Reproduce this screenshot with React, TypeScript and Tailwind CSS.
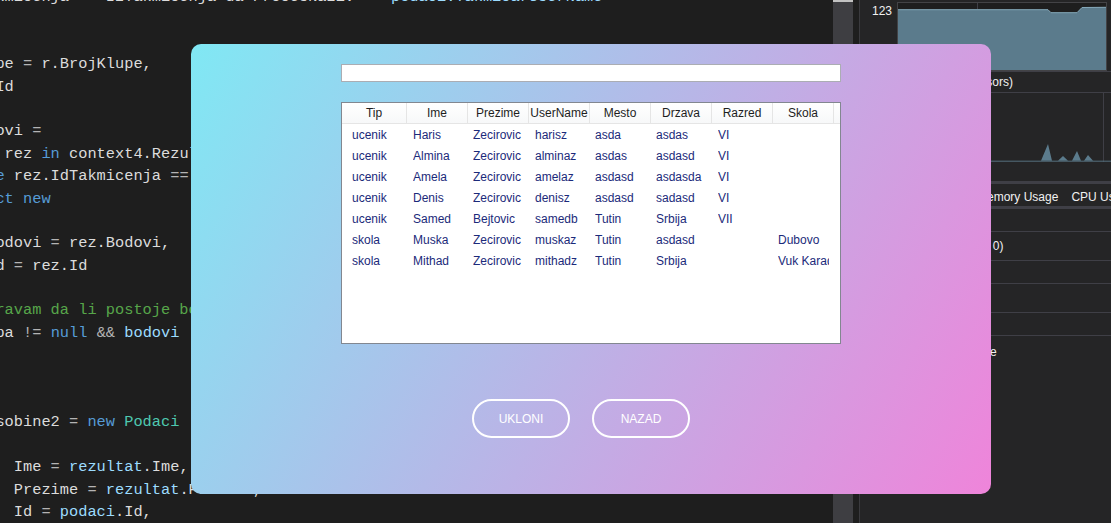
const C = {
  txt: '#dcdcdc',
  op: '#b4b4b4',
  kw: '#569cd6',
  loc: '#9cdcfe',
  type: '#4ec9b0',
  com: '#57a64a',
};

type Seg = [string, string];

// visible slice of the code behind the dialog
const codeLines: Seg[][] = [
  [['kmicenja    IzTakmicenja da ProcesNaziv    ', C.txt], ['podaci.TakmicarUserName', C.loc]],
  [],
  [],
  [['pe ', C.txt], ['=', C.op], [' r.BrojKlupe,', C.txt]],
  [['Id', C.txt]],
  [],
  [['ovi ', C.txt], ['=', C.op]],
  [[' rez ', C.txt], ['in', C.kw], [' context4.Rezultati', C.txt]],
  [['e', C.kw], [' rez.IdTakmicenja ', C.txt], ['==', C.op], [' takmicenje.Id', C.txt]],
  [['ct new', C.kw]],
  [],
  [['odovi ', C.txt], ['=', C.op], [' rez.Bodovi,', C.txt]],
  [['d ', C.txt], ['=', C.op], [' rez.Id', C.txt]],
  [],
  [['ravam da li postoje bodovi', C.com]],
  [['pa ', C.txt], ['!=', C.op], [' ', C.txt], ['null', C.kw], [' ', C.txt], ['&&', C.op], [' ', C.txt], ['bodovi', C.loc], [' ', C.txt], ['!=', C.op], [' ', C.txt], ['null', C.kw], [')', C.txt]],
  [],
  [],
  [],
  [['sobine2 ', C.txt], ['=', C.op], [' ', C.txt], ['new', C.kw], [' ', C.txt], ['Podaci', C.type]],
  [],
  [['  Ime ', C.txt], ['=', C.op], [' ', C.txt], ['rezultat', C.loc], ['.Ime,', C.txt]],
  [['  Prezime ', C.txt], ['=', C.op], [' ', C.txt], ['rezultat', C.loc], ['.Prezime,', C.txt]],
  [['  Id ', C.txt], ['=', C.op], [' ', C.txt], ['podaci', C.loc], ['.Id,', C.txt]],
];

const columns = [
  { name: 'Tip', w: 'w-[65px]', pad: 'pl-[10px] pr-[4px]' },
  { name: 'Ime', w: 'w-[61px]', pad: 'px-[6px]' },
  { name: 'Prezime', w: 'w-[61px]', pad: 'px-[5px]' },
  { name: 'UserName', w: 'w-[61px]', pad: 'px-[6px]' },
  { name: 'Mesto', w: 'w-[61px]', pad: 'px-[5px]' },
  { name: 'Drzava', w: 'w-[61px]', pad: 'px-[5px]' },
  { name: 'Razred', w: 'w-[61px]', pad: 'px-[6px]' },
  { name: 'Skola', w: 'w-[61px]', pad: 'px-[5px]' },
];

const rows = [
  ['ucenik', 'Haris', 'Zecirovic', 'harisz', 'asda', 'asdas', 'VI', ''],
  ['ucenik', 'Almina', 'Zecirovic', 'alminaz', 'asdas', 'asdasd', 'VI', ''],
  ['ucenik', 'Amela', 'Zecirovic', 'amelaz', 'asdasd', 'asdasda', 'VI', ''],
  ['ucenik', 'Denis', 'Zecirovic', 'denisz', 'asdasd', 'sadasd', 'VI', ''],
  ['ucenik', 'Samed', 'Bejtovic', 'samedb', 'Tutin', 'Srbija', 'VII', ''],
  ['skola', 'Muska', 'Zecirovic', 'muskaz', 'Tutin', 'asdasd', '', 'Dubovo'],
  ['skola', 'Mithad', 'Zecirovic', 'mithadz', 'Tutin', 'Srbija', '', 'Vuk Karadzic'],
];

function Editor() {
  return (
    <div className="w-[833px] h-[523px] overflow-hidden shrink-0">
      <div className="-mt-[14px] -ml-[4.6px] font-['Liberation_Mono',monospace] text-[15.33px] whitespace-pre">
        {codeLines.map((line, i) => (
          <div key={i} className="h-[22.4px] leading-[22.4px]">
            {line.map(([t, color], j) => (
              <span key={j} style={{ color }}>
                {t}
              </span>
            ))}
          </div>
        ))}
      </div>
    </div>
  );
}

function DiagnosticsPanel() {
  return (
    <div className="flex-1 h-full bg-[#252526] font-['Liberation_Sans',sans-serif] text-[12px] text-[#f1f1f1]">
      {/* process memory graph */}
      <div className="flex h-[71px]">
        <div className="w-[37px] pr-[5px] pt-[2px] text-right leading-[18px]">123</div>
        <svg width="214" height="71" className="block">
          <rect x="0.5" y="2.5" width="209" height="68" fill="#1e1e1e" stroke="#434346" />
          <polygon
            points="1,9.7 151,9.7 154,12.7 180,12.7 185,7.5 209,7.3 209,70 1,70"
            fill="#5b7b8c"
          />
          <polyline
            points="1,9.7 151,9.7 154,12.7 180,12.7 185,7.5 209,7.3"
            fill="none"
            stroke="#86aabc"
          />
          <line x1="80.5" y1="3" x2="80.5" y2="9" stroke="#3f3f46" />
        </svg>
      </div>
      <div className="h-[22px] border-y border-[#3f3f46] pl-[15px] leading-[20px]">
        CPU (% of all processors)
      </div>
      {/* cpu graph */}
      <div className="flex h-[69px]">
        <div className="w-[37px]" />
        <svg width="214" height="69" className="block">
          <line x1="206.5" y1="0" x2="206.5" y2="69" stroke="#3f3f46" />
          <polygon
            points="144,67.7 151,51 155,67.7 161,67.7 166,63 171,67.7 175,67.7 180,58 184,67.7 187,67.7 191,62 196,67.7"
            fill="#5b7b8c"
          />
          <line x1="0" y1="68.2" x2="214" y2="68.2" stroke="#56707e" />
        </svg>
      </div>
      <div className="h-[19px]" />
      <div className="h-[3px] bg-[#3f3f46]" />
      <div className="h-[22px] pt-[4px] leading-[18px] pl-[3px] flex gap-[13px] whitespace-nowrap">
        <span>Summary</span>
        <span>Events</span>
        <span>Memory Usage</span>
        <span>CPU Usage</span>
      </div>
      <div className="h-[3px] bg-[#3f3f46]" />
      <div className="h-[23px] border-b border-[#3f3f46]" />
      <div className="h-[29px] border-b border-[#3f3f46] pl-[32px] leading-[28px]">
        Show Events (0 of 0)
      </div>
      <div className="h-[23px] border-b border-[#3f3f46]" />
      <div className="h-[29px] border-b border-[#3f3f46]" />
      <div className="h-[23px] border-b border-[#3f3f46]" />
      <div className="h-[32px] pl-[32px] leading-[32px]">Record CPU Profile</div>
    </div>
  );
}

function ResultsDialog() {
  return (
    <div className="absolute left-[191px] top-[44px] w-[800px] h-[450px] rounded-[10px] bg-[linear-gradient(120deg,#80e8f4,#ef84da)] pt-[20px] pl-[150px] font-['Liberation_Sans',sans-serif]">
      <div className="w-[500px] h-[18px] border border-[#abadb3] bg-white" />

      <div className="mt-[20px] w-[500px] h-[242px] border border-[#828790] bg-white overflow-hidden">
        <div className="flex h-[21px] border-b border-[#e5e5e5] bg-[linear-gradient(#ffffff,#f7f8f9)]">
          {columns.map((c) => (
            <div
              key={c.name}
              className={`${c.w} shrink-0 border-r border-[#e5e5e5] text-center text-[12px] leading-[20px] text-[#1e1e1e]`}
            >
              {c.name}
            </div>
          ))}
        </div>
        {rows.map((r, i) => (
          <div key={i} className="flex h-[21px] items-center text-[12px] text-[#1b2a7a]">
            {r.map((cell, j) => (
              <div key={j} className={`${columns[j].w} ${columns[j].pad} shrink-0`}>
                <div className="overflow-hidden whitespace-nowrap">{cell}</div>
              </div>
            ))}
          </div>
        ))}
      </div>

      <div className="mt-[55px] pl-[131px] flex gap-[22px]">
        <button className="w-[98px] h-[39px] rounded-full border-2 border-white text-white text-[12px]">
          UKLONI
        </button>
        <button className="w-[98px] h-[39px] rounded-full border-2 border-white text-white text-[12px]">
          NAZAD
        </button>
      </div>
    </div>
  );
}

export default function App() {
  return (
    <div className="relative w-[1111px] h-[523px] overflow-hidden bg-[#1e1e1e] flex">
      <Editor />
      {/* editor scrollbar */}
      <div className="w-[20px] h-full bg-[#3e3e42] shrink-0">
        <div className="h-[2px] bg-[#c2c2c2]" />
      </div>
      <div className="w-[6px] h-full shrink-0" />
      <div className="w-[1px] h-full bg-[#3a3a3e] shrink-0" />
      <DiagnosticsPanel />
      <ResultsDialog />
    </div>
  );
}
